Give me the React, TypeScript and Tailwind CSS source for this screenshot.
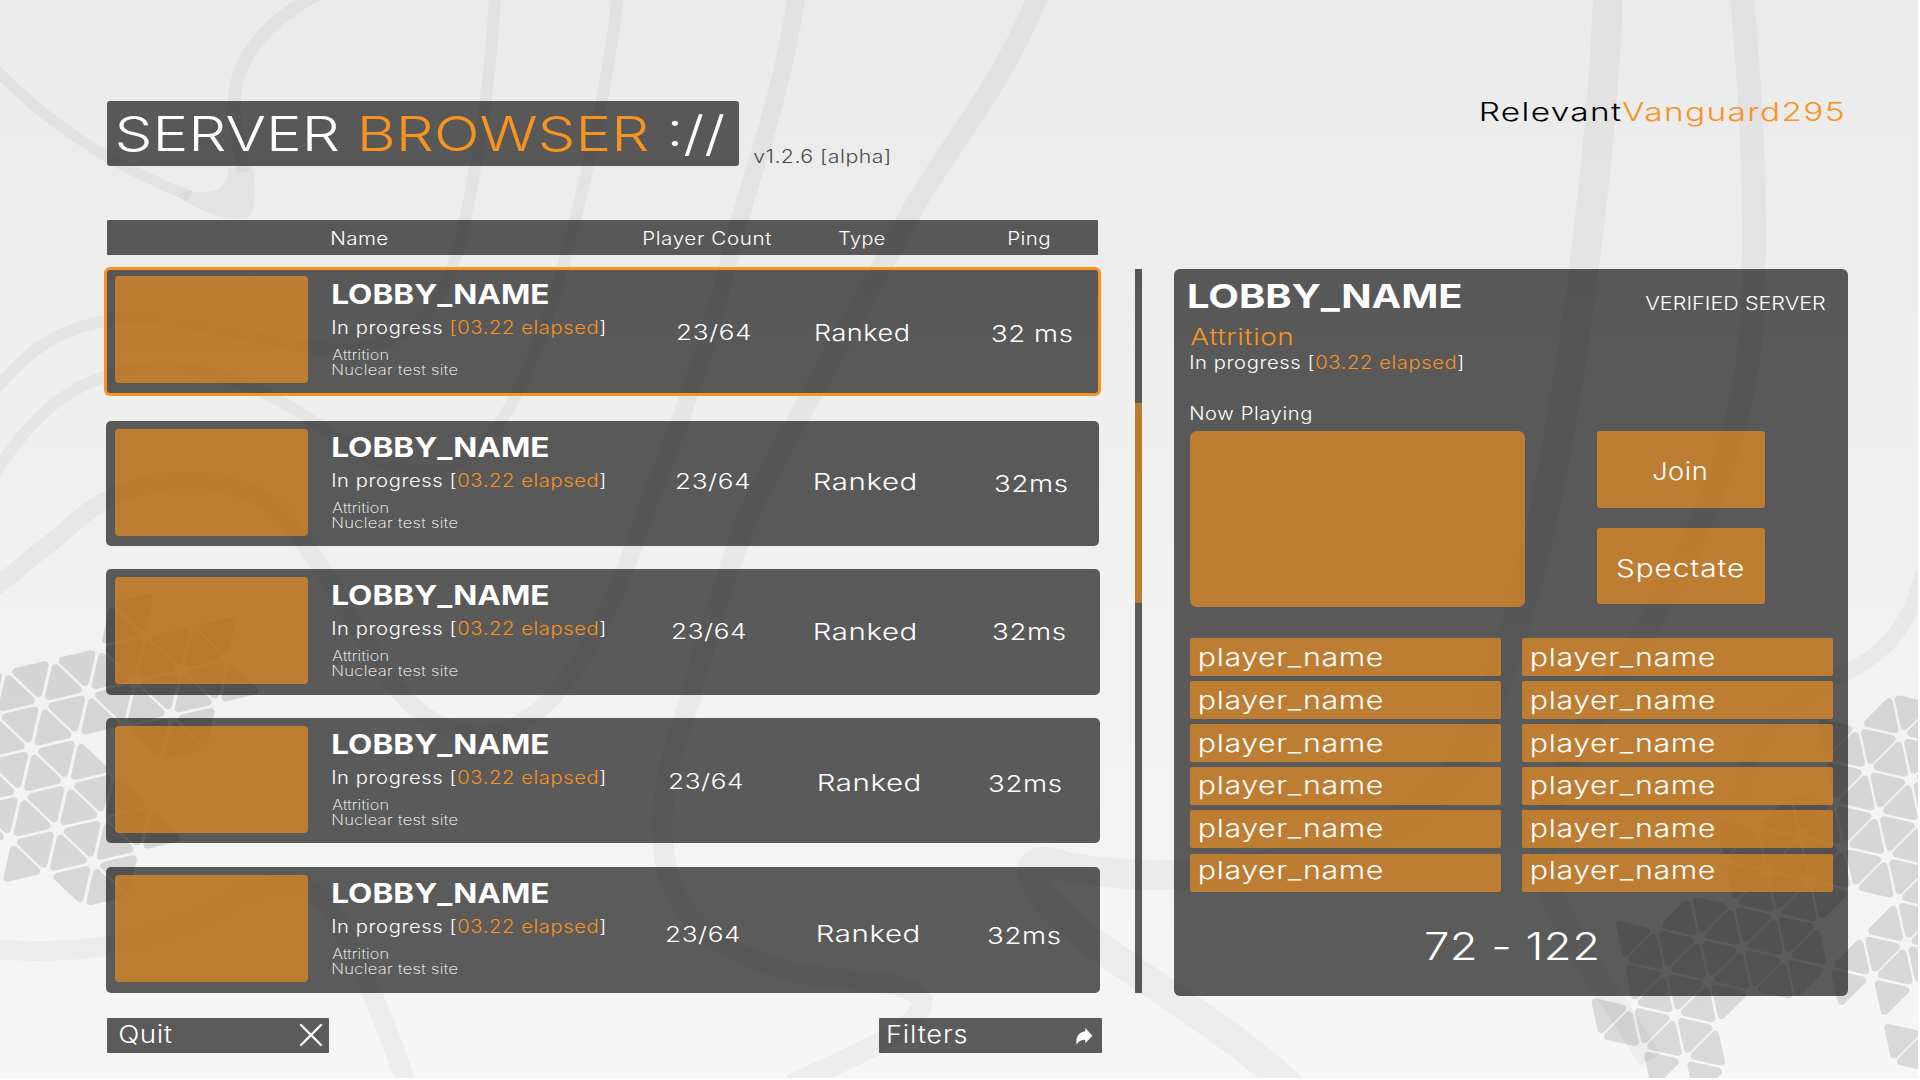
import React, { useLayoutEffect, useRef } from "react";

/** Wide grotesque lettering: stretches a line horizontally so its ink spans `w` pixels. */
function Wide({ w, className = "", children }: { w: number; className?: string; children: React.ReactNode }) {
  const ref = useRef<HTMLSpanElement>(null);
  useLayoutEffect(() => {
    const el = ref.current;
    if (!el) return;
    const fit = () => {
      const cs = getComputedStyle(el);
      const ctx = document.createElement("canvas").getContext("2d");
      if (!ctx) return;
      ctx.font = `${cs.fontWeight} ${cs.fontSize} ${cs.fontFamily}`;
      const spacing = parseFloat(cs.letterSpacing) || 0;
      (ctx as unknown as { letterSpacing: string }).letterSpacing = `${spacing}px`;
      const m = ctx.measureText(el.textContent ?? "");
      const left = -m.actualBoundingBoxLeft;
      const ink = m.actualBoundingBoxRight - left - spacing;
      const s = (w - 2) / ink;
      el.style.transform = `translateX(${0.3 - left * s}px) scaleX(${s})`;
    };
    fit();
    document.fonts?.ready.then(fit);
  }, [w]);
  return (
    <div className="h-0 w-0 overflow-visible">
      <span ref={ref} className={`inline-block origin-left whitespace-pre leading-none align-top ${className}`}>
        {children}
      </span>
    </div>
  );
}

type Pt = [number, number];
type Tri = [number, number, 0 | 1];

function triPoints(o: Pt, a: Pt, b: Pt, [i, j, kind]: Tri) {
  const v = (p: number, q: number): Pt => [o[0] + p * a[0] + q * b[0], o[1] + p * a[1] + q * b[1]];
  const pts = kind === 0 ? [v(i, j), v(i + 1, j), v(i + 1, j + 1)] : [v(i, j), v(i, j + 1), v(i + 1, j + 1)];
  const cx = (pts[0][0] + pts[1][0] + pts[2][0]) / 3;
  const cy = (pts[0][1] + pts[1][1] + pts[2][1]) / 3;
  const k = 0.61;
  return pts.map(([x, y]) => `${(cx + (x - cx) * k).toFixed(1)},${(cy + (y - cy) * k).toFixed(1)}`).join(" ");
}

const both = (cells: Pt[]): Tri[] => cells.flatMap(([i, j]): Tri[] => [[i, j, 0], [i, j, 1]]);

const leftTris: Tri[] = [
  ...both([
    [-1, -1], [0, -1], [1, -1], [2, -1], [3, -1],
    [-2, 0], [-1, 0], [0, 0], [1, 0], [2, 0], [3, 0],
    [-2, 1], [-1, 1], [0, 1], [-1, 2], [0, 2], [1, 2],
    [0, 3], [1, 3], [2, 3], [3, 1],
  ]),
  [-2, -1, 0], [1, -2, 0], [1, -2, 1], [4, 0, 1], [2, 1, 0], [1, 1, 1],
  [2, 2, 1], [3, 3, 1], [1, 4, 0], [2, 4, 0], [2, 4, 1],
];

const rightTris: Tri[] = [
  ...both([
    [-1, -4], [0, -4], [1, -4], [-1, -3], [0, -3], [1, -3], [2, -3], [0, -2], [1, -2],
    [-1, -1], [0, -1], [1, -1], [-1, 0], [0, 0], [1, 0], [2, 0],
    [0, 1], [1, 1], [3, 1], [-1, 2], [0, 2], [1, 2], [3, 2], [4, 2],
    [-1, 3], [0, 3], [1, 3], [2, 3], [3, 3], [4, 3], [5, 3],
    [0, 4], [1, 4], [2, 4],
  ]),
  [-1, -5, 0], [0, -5, 1], [-2, -4, 0], [-1, -2, 0], [-2, -1, 0], [2, -1, 1],
  [-1, 1, 0], [-2, 2, 0], [2, 2, 1], [5, 2, 0], [6, 2, 1], [-1, 4, 0],
];

const curves: { d: string; w: number }[] = [
  { d: "M322 -8 C268 20 242 52 235 90 C232 120 240 150 243 172", w: 13 },
  { d: "M-6 68 C50 125 110 165 190 196", w: 11 },
  { d: "M495 -5 C492 60 484 130 466 215 C450 300 420 340 360 348 C280 356 200 314 130 318 C70 322 30 345 -6 392", w: 12 },
  { d: "M618 -5 C608 80 594 150 562 270 C535 360 515 410 480 448 C440 485 390 474 340 440 C280 395 220 365 150 368 C80 374 40 405 -6 474", w: 12 },
  { d: "M797 -5 C782 90 760 150 738 225 C715 320 690 400 650 500 C620 590 590 660 545 705 C490 755 430 735 390 680 C340 605 310 535 265 500 C215 470 140 475 90 510 C60 535 30 560 -6 588", w: 18 },
  { d: "M1038 -5 C1005 80 960 130 915 205 C860 310 800 410 750 510 C725 580 705 640 690 700 C665 770 655 820 668 875 C685 930 730 955 790 972 C850 985 908 976 922 1000 C924 1025 880 1045 790 1085", w: 21 },
  { d: "M-6 949 C80 956 150 944 215 910 C260 880 300 872 328 905 C360 960 385 1020 408 1088", w: 20 },
  { d: "M1608 -5 C1604 110 1590 230 1570 370 C1550 500 1520 640 1470 750 C1430 820 1360 846 1270 864 C1190 880 1110 878 1045 862 C1015 860 1040 905 1090 940 C1150 985 1230 1030 1294 1090", w: 30 },
  { d: "M1742 -5 C1750 90 1758 200 1752 320 C1746 430 1700 540 1640 640 C1570 750 1540 810 1542 860 C1560 940 1610 990 1650 1060", w: 24 },
  { d: "M1924 570 C1910 630 1880 660 1830 680 C1780 706 1745 740 1742 800", w: 16 },
];

function Backdrop() {
  return (
    <svg viewBox="0 0 1918 1078" className="h-[1078px] w-[1918px] [grid-area:1/1]" aria-hidden="true">
      <g fill="none" stroke="#000" strokeOpacity={0.036}>
        {curves.map((c) => (
          <path key={c.d} d={c.d} strokeWidth={c.w} />
        ))}
      </g>
      <path d="M252 166 C257 190 256 214 246 218 C222 222 200 210 176 196 L188 190 C214 196 226 190 229 168 Z" fill="#000" fillOpacity={0.036} />
      <g fill="#000" stroke="#000" strokeWidth={8} strokeLinejoin="round" opacity={0.115}>
        {leftTris.map((t) => (
          <polygon key={`l${t.join()}`} points={triPoints([41.7, 703.3], [46.7, -11], [-10.4, 45.4], t)} />
        ))}
        {rightTris.map((t) => (
          <polygon key={`r${t.join()}`} points={triPoints([1766.7, 870.7], [9.5, 43.5], [33.67, -33.67], t)} />
        ))}
      </g>
    </svg>
  );
}

interface Lobby {
  frame: string;
  bracketLit?: boolean;
  count: string;
  type: string;
  typeW: number;
  ping: string;
  pingText: string;
  pingW: number;
}

const lobbies: Lobby[] = [
  {
    frame: "-mx-px h-[127px] pl-[10px] outline-3 -outline-offset-2 outline-[#f7931e]",
    bracketLit: true,
    count: "pl-[17px] pt-[54px]", type: "pl-[16px] pt-[54px]", typeW: 93,
    ping: "pl-[12px] pt-[55px]", pingText: "32 ms", pingW: 81,
  },
  {
    frame: "mt-[26px] h-[125px] pl-[9px]",
    count: "pl-[16px] pt-[50px]", type: "pl-[15px] pt-[50px]", typeW: 101,
    ping: "pl-[15px] pt-[52px]", pingText: "32ms", pingW: 73,
  },
  {
    frame: "mt-[23px] -mr-px h-[126px] pl-[9px]",
    count: "pl-[12px] pt-[52px]", type: "pl-[15px] pt-[52px]", typeW: 101,
    ping: "pl-[13px] pt-[52px]", pingText: "32ms", pingW: 73,
  },
  {
    frame: "mt-[23px] -mr-px h-[125px] pl-[9px]",
    count: "pl-[9px] pt-[53px]", type: "pl-[19px] pt-[54px]", typeW: 101,
    ping: "pl-[9px] pt-[55px]", pingText: "32ms", pingW: 73,
  },
  {
    frame: "mt-[24px] -mr-px h-[126px] pl-[9px]",
    count: "pl-[6px] pt-[57px]", type: "pl-[18px] pt-[56px]", typeW: 101,
    ping: "pl-[8px] pt-[58px]", pingText: "32ms", pingW: 73,
  },
];

function LobbyCard({ l }: { l: Lobby }) {
  return (
    <div className={`flex rounded-[5px] bg-[#111111ad] text-white ${l.frame}`}>
      <div className="mt-2 h-[107px] w-[193px] shrink-0 rounded bg-[#f7931ea1]" />
      <div className="ml-6 w-[328px] shrink-0 pt-[12.5px]">
        <Wide w={217.5} className="text-[27px] font-bold">LOBBY_NAME</Wide>
        <div className="pt-[38.5px]">
          <Wide w={274} className="text-[18px] tracking-[0.03em]">
            In progress <span className="text-[#f7931e]">{l.bracketLit ? "[" : ""}</span>
            {l.bracketLit ? "" : "["}
            <span className="text-[#f7931e]">03.22 elapsed</span>]
          </Wide>
        </div>
        <div className="pt-[29px]">
          <Wide w={58} className="text-[14.5px] font-extralight tracking-[0.01em]">Attrition</Wide>
        </div>
        <div className="pt-[15px]">
          <Wide w={127} className="text-[14.5px] font-extralight tracking-[0.02em]">Nuclear test site</Wide>
        </div>
      </div>
      <div className={`w-[140px] shrink-0 ${l.count}`}>
        <Wide w={74} className="text-[21px] tracking-[0.02em]">23/64</Wide>
      </div>
      <div className={`w-[180px] shrink-0 ${l.type}`}>
        <Wide w={l.typeW} className="text-[23px] tracking-[0.02em]">Ranked</Wide>
      </div>
      <div className={l.ping}>
        <Wide w={l.pingW} className="text-[23px] tracking-[0.02em]">{l.pingText}</Wide>
      </div>
    </div>
  );
}

function Player({ className }: { className: string }) {
  return (
    <div className={`rounded-[2px] bg-[#f7931ea1] pl-[10px] ${className}`}>
      <Wide w={183} className="text-[24.5px] tracking-[0.02em]">player_name</Wide>
    </div>
  );
}

const playerRows = [
  "h-[38px] pt-[6.5px]",
  "mt-[5px] h-[38px] pt-[7px]",
  "mt-[5px] h-[38px] pt-[7px]",
  "mt-[5px] h-[38px] pt-[6px]",
  "mt-[5px] h-[38px] pt-[6px]",
  "mt-[6px] h-[38px] pt-[4px]",
];

export default function App() {
  return (
    <div className="h-[1080px] w-[1920px] overflow-hidden bg-white font-['Inter','Liberation_Sans',sans-serif] font-light">
      <div className="grid h-[1078px] w-[1918px] bg-linear-to-b from-[#eaeaea] to-[#f6f6f6]">
        <Backdrop />
        <main className="flex min-w-0 flex-col [grid-area:1/1]">
          <header className="mt-[101px] flex h-[65px] shrink-0 pl-[107px]">
            <h1 className="h-[65px] w-[632px] rounded-[3px] bg-[#111111ad] pl-[11px] pt-[8.5px] text-white">
              <Wide w={608} className="text-[48px]">
                SERVER <span className="text-[#f7931e]">BROWSER</span> ://
              </Wide>
            </h1>
            <div className="ml-[14px] w-[728px] pt-[47px] text-[#4a4a4a]">
              <Wide w={138} className="text-[18px] tracking-[0.02em]">v1.2.6 [alpha]</Wide>
            </div>
            <div className="-mt-[2.5px] text-black">
              <Wide w={362.5} className="text-[25.5px] tracking-[0.04em]">
                Relevant<span className="text-[#f7931e]">Vanguard295</span>
              </Wide>
            </div>
          </header>

          <div className="mt-[54px] flex pl-[106px]">
            <section className="w-[993px] shrink-0">
              <div className="ml-px mr-[1px] flex h-[35px] rounded-[1px] bg-[#111111ad] text-white">
                <div className="w-[311px] pl-[224px] pt-[10px]">
                  <Wide w={58} className="text-[18px] tracking-[0.02em]">Name</Wide>
                </div>
                <div className="w-[420px] pl-[225px] pt-[9.5px]">
                  <Wide w={129} className="text-[18px] tracking-[0.03em]">Player Count</Wide>
                </div>
                <div className="w-[170px] pt-[9.5px]">
                  <Wide w={48} className="text-[18px] tracking-[0.02em]">Type</Wide>
                </div>
                <div className="pt-[9.5px]">
                  <Wide w={43} className="text-[18px] tracking-[0.02em]">Ping</Wide>
                </div>
              </div>
              <div className="mt-[13px] flex flex-col">
                {lobbies.map((l, i) => (
                  <LobbyCard key={i} l={l} />
                ))}
              </div>
            </section>

            <div className="ml-[36px] mt-[49px] flex h-[724px] w-[7px] shrink-0 flex-col">
              <div className="h-[134px] bg-[#111111ad]" />
              <div className="h-[200px] bg-[#bb7b30]" />
              <div className="grow bg-[#111111ad]" />
            </div>

            <section className="ml-[32px] mt-[49px] h-[727px] w-[674px] shrink-0 rounded-[6px] bg-[#111111ad] pl-4 text-white">
              <div className="flex h-[59px] pt-[11px]">
                <div className="-ml-[1.5px] w-[456px]">
                  <Wide w={274} className="text-[33px] font-bold">LOBBY_NAME</Wide>
                </div>
                <div className="pt-[15px]">
                  <Wide w={182} className="text-[18px]">VERIFIED SERVER</Wide>
                </div>
              </div>
              <div className="-mt-[2.5px]">
                <Wide w={103} className="text-[23px] tracking-[0.02em] text-[#f7931e]">Attrition</Wide>
              </div>
              <div className="pt-[28px]">
                <Wide w={274} className="text-[18px] tracking-[0.03em]">
                  In progress [<span className="text-[#f7931e]">03.22 elapsed</span>]
                </Wide>
              </div>
              <div className="pt-[51px]">
                <Wide w={122.5} className="text-[18px] tracking-[0.03em]">Now Playing</Wide>
              </div>
              <div className="mt-[26.5px] flex">
                <div className="h-[176px] w-[335px] rounded-[7px] bg-[#f7931ea1]" />
                <div className="ml-[72px] flex flex-col gap-5">
                  <button className="flex h-[77px] w-[168px] items-start rounded-[3px] bg-[#f7931ea1] pl-[56px] pt-[29px]">
                    <Wide w={54.5} className="text-[24px] tracking-[0.02em]">Join</Wide>
                  </button>
                  <button className="flex h-[76px] w-[168px] items-start rounded-[3px] bg-[#f7931ea1] pl-[20px] pt-[29px]">
                    <Wide w={127} className="text-[24px] tracking-[0.03em]">Spectate</Wide>
                  </button>
                </div>
              </div>
              <div className="mt-[31px] flex gap-[21px]">
                <div className="w-[311px]">
                  {playerRows.map((r, i) => (
                    <Player key={i} className={r} />
                  ))}
                </div>
                <div className="w-[311px]">
                  {playerRows.map((r, i) => (
                    <Player key={i} className={r} />
                  ))}
                </div>
              </div>
              <div className="pl-[236px] pt-[35px]">
                <Wide w={172.5} className="text-[38px] tracking-[0.01em]">72 - 122</Wide>
              </div>
            </section>
          </div>

          <footer className="mt-[22px] flex pl-[107px] text-white">
            <button className="flex h-[35px] w-[222px] rounded-[1px] bg-[#111111ad] pl-[12px] pt-[5px]">
              <div className="w-[180px] text-left">
                <Wide w={54} className="text-[24px] tracking-[0.02em]">Quit</Wide>
              </div>
              <svg viewBox="0 0 24 24" className="h-6 w-6" fill="none" stroke="#fff" strokeWidth={2.4} strokeLinecap="round">
                <path d="M2 2 L22 22 M22 2 L2 22" />
              </svg>
            </button>
            <button className="ml-[550px] flex h-[35px] w-[223px] rounded-[1px] bg-[#111111ad] pl-[9px] pt-[5px]">
              <div className="w-[188px] text-left">
                <Wide w={80} className="text-[24px] tracking-[0.03em]">Filters</Wide>
              </div>
              <svg viewBox="0 0 50 52" className="mt-[5px] h-[17px] w-[16.5px]" fill="#fff">
                <path d="M28 0 L50 24 L28 47 V36 C16 36 8 40 2 51 C-2 30 6 13 28 10 Z" />
              </svg>
            </button>
          </footer>
        </main>
      </div>
    </div>
  );
}
